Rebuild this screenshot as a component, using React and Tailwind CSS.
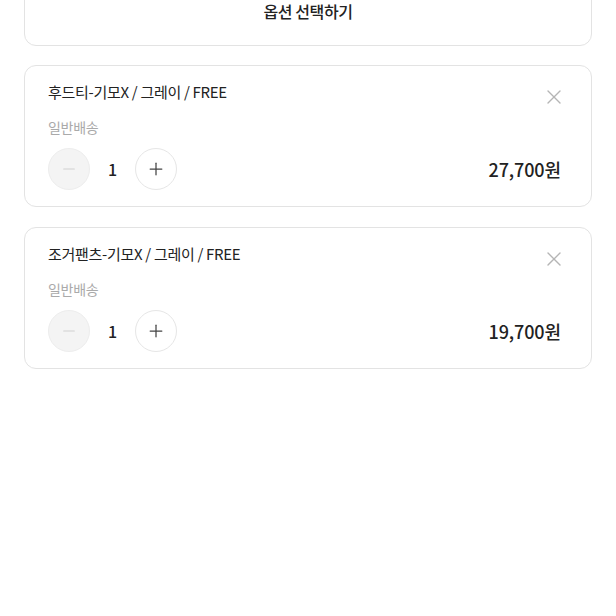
import { Minus, Plus, X } from "lucide-react"

const ITEMS = [
  { name: "후드티-기모X / 그레이 / FREE", qty: 1, price: "27,700원" },
  { name: "조거팬츠-기모X / 그레이 / FREE", qty: 1, price: "19,700원" },
]

const FONT = { fontFamily: '"Noto Sans CJK KR", "Noto Sans", sans-serif' }

export default function App() {
  return (
    <div className="w-[616px] h-[616px] bg-white overflow-hidden px-[24px]" style={FONT}>
      <div className="-mt-[20px] h-[66px] border border-[#e3e3e3] rounded-[12px] flex justify-center pt-[20px]">
        <span className="text-[16px] leading-[20px] font-medium text-[#222] tracking-[-0.4px]">옵션 선택하기</span>
      </div>

      <div className="flex flex-col gap-[20px] mt-[19px]">
        {ITEMS.map((item, i) => (
          <div key={i} className="relative h-[142px] border border-[#e3e3e3] rounded-[12px] pl-[23px] pr-[30px] pt-[16px]">
            <button className="absolute right-[25px] top-[19px] text-[#b5b5b5]">
              <X className="w-[24px] h-[24px]" strokeWidth={1.4} />
            </button>
            <div className="text-[15px] leading-[20px] text-[#222] tracking-[-0.3px]">{item.name}</div>
            <div className="mt-[15px] text-[14px] leading-[20px] text-[#aaa] tracking-[-0.3px]">일반배송</div>
            <div className="mt-[11px] flex items-center">
              <button className="w-[42px] h-[42px] rounded-full bg-[#f4f4f4] border border-[#ededed] flex items-center justify-center text-[#cfcfcf]">
                <Minus className="w-[18px] h-[18px]" strokeWidth={1.5} />
              </button>
              <span className="w-[45px] text-center text-[16px] font-medium text-[#222]">{item.qty}</span>
              <button className="w-[42px] h-[42px] rounded-full bg-white border border-[#e6e6e6] flex items-center justify-center text-[#444]">
                <Plus className="w-[20px] h-[20px]" strokeWidth={1.5} />
              </button>
              <span className="ml-auto text-[18px] font-medium text-[#222] tracking-[-0.1px]">{item.price}</span>
            </div>
          </div>
        ))}
      </div>
    </div>
  )
}
